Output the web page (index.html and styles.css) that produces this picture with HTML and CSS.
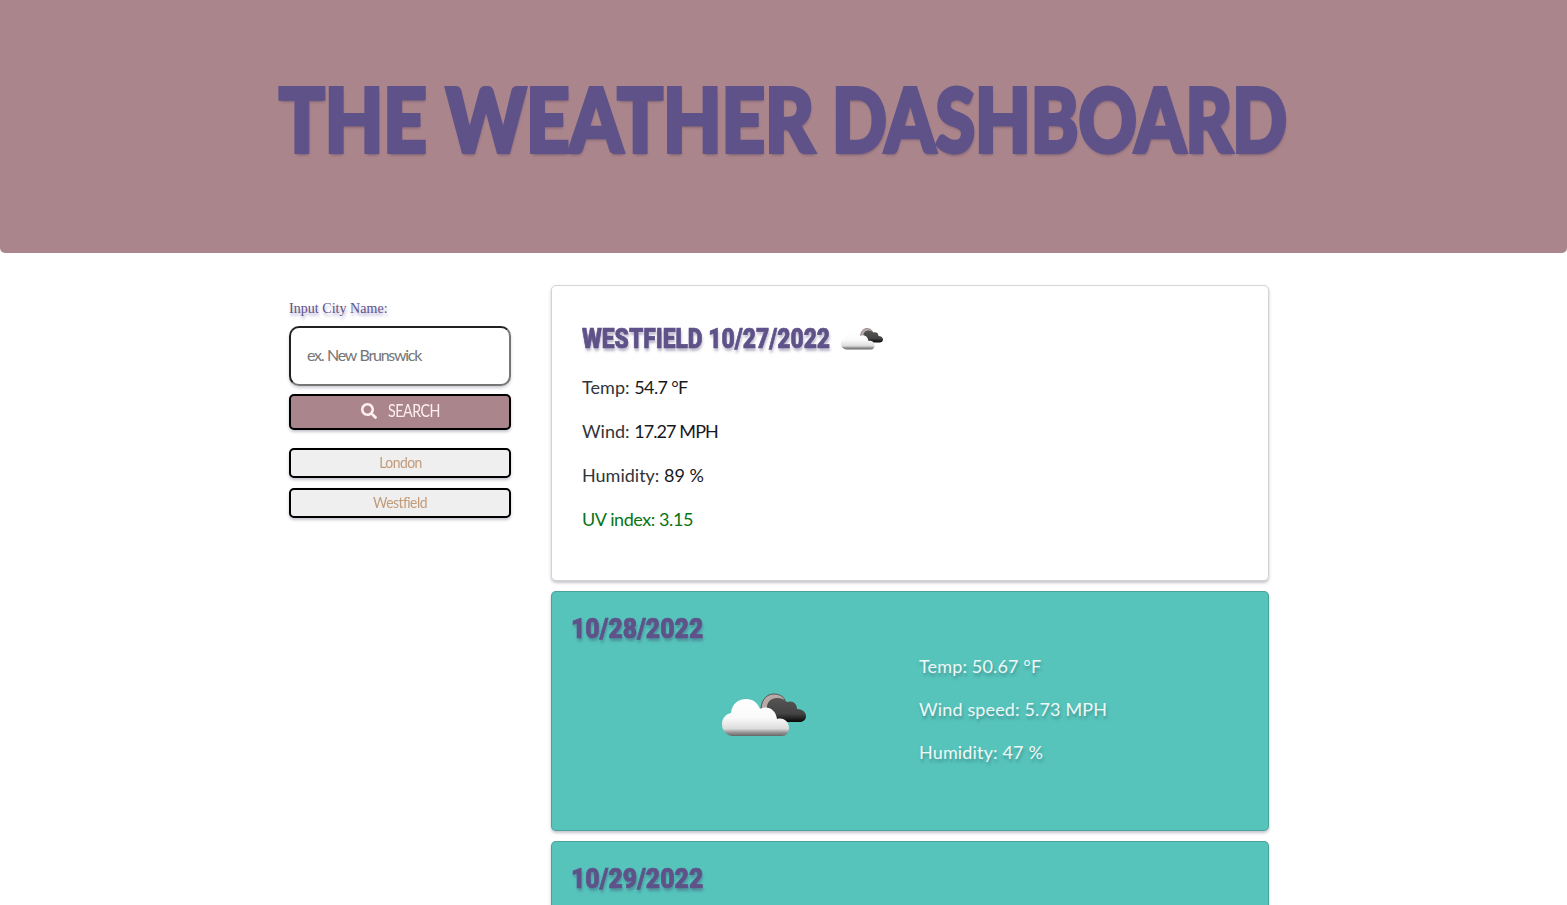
FILE: index.html
```html
<!DOCTYPE html>
<html lang="en">
<head>
<meta charset="utf-8">
<title>The Weather Dashboard</title>
<link rel="stylesheet" href="styles.css">
</head>
<body>
<svg class="defs" width="0" height="0" aria-hidden="true">
  <defs>
    <linearGradient id="white-cloud" x1="0" y1="0" x2="0" y2="1"><stop offset="0" stop-color="#fff"/><stop offset=".5" stop-color="#fafafa"/><stop offset=".8" stop-color="#ddd"/><stop offset=".9" stop-color="#999"/><stop offset="1" stop-color="#666"/></linearGradient>
    <linearGradient id="dark-cloud" x1="0" y1="0" x2="0" y2="1"><stop offset="0" stop-color="#555"/><stop offset=".65" stop-color="#444"/><stop offset="1" stop-color="#080808"/></linearGradient>
    <symbol id="clouds" viewBox="0 0 84 44">
      <path d="M39 15C40 6 45 1 52 1c5 0 9 2 11 6L46 17z" fill="#b9aaa8" stroke="#555" stroke-width="1"/>
      <path d="M45 17C44 9 49 5 55 5c5 0 8 2 10 4 6-2 10 2 10 7 5 0 9 3 9 7 0 4-3 6-7 6H50z" fill="url(#dark-cloud)"/>
      <path d="M10 43C4 42 0 38 0 31c0-6 4-10 9-11C10 11 16 6 24 6c7 0 12 4 14 10 8-4 16 1 17 10 7-2 12 3 12 9 0 5-3 8-7 8z" fill="url(#white-cloud)"/>
    </symbol>
  </defs>
</svg>
<header class="banner"><h1 class="title"><span class="word the">THE</span> <span class="word weather">WEATHER</span> <span class="word dashboard">DASHBOARD</span></h1></header>
<main class="layout">
  <aside class="sidebar">
    <label class="label" for="city">Input City Name:</label>
    <div class="field"><input class="input" id="city" placeholder="ex. New Brunswick"></div>
    <button class="button search"><svg class="glass" viewBox="0 0 512 512"><path d="M505 442.700 405.300 343c-4.500-4.500-10.600-7-17-7H372c27.600-35.300 44-79.700 44-128C416 93.100 322.900 0 208 0S0 93.100 0 208s93.100 208 208 208c48.300 0 92.700-16.400 128-44v16.300c0 6.400 2.500 12.500 7 17l99.700 99.700c9.400 9.400 24.600 9.400 33.900 0l28.300-28.300c9.400-9.400 9.400-24.600.1-34zM208 336c-70.700 0-128-57.200-128-128 0-70.700 57.200-128 128-128 70.700 0 128 57.200 128 128 0 70.700-57.200 128-128 128z"/></svg><span class="narrow">SEARCH</span></button>
    <button class="button city"><span class="narrow">London</span></button>
    <button class="button city"><span class="narrow">Westfield</span></button>
  </aside>
  <div class="cards">
    <section class="card today">
      <div class="heading-row"><h2 class="heading city-date">WESTFIELD 10/27/2022</h2><svg class="small-clouds"><use href="#clouds"/></svg></div>
      <p class="reading temp">Temp: <span class="value">54.7 °F</span></p>
      <p class="reading wind">Wind: <span class="value">17.27 MPH</span></p>
      <p class="reading humidity">Humidity: <span class="value">89 %</span></p>
      <p class="reading uv">UV index: 3.15</p>
    </section>
    <section class="card forecast">
      <h2 class="heading date">10/28/2022</h2>
      <div class="details">
        <svg class="large-clouds"><use href="#clouds"/></svg>
        <div class="stats"><p class="stat">Temp: 50.67 °F</p><p class="stat">Wind speed: 5.73 MPH</p><p class="stat">Humidity: 47 %</p></div>
      </div>
    </section>
    <section class="card forecast"><h2 class="heading date">10/29/2022</h2></section>
  </div>
</main>
</body>
</html>
```
FILE: styles.css
```css
* { box-sizing: border-box; }
body { margin: 0; height: 905px; overflow: hidden; background: #fff; color: #212529; font-family: Lato, sans-serif; }
h1, h2, p { margin: 0; }
.defs { position: absolute; }
.banner { height: 253px; padding: 60px 0 0 279px; background: #aa858c; border-radius: 0 0 5px 5px; }
.title { display: flex; font: 900 88px/116px Lato, sans-serif; color: #5f5289; text-shadow: 1px 3px 3px rgba(50,35,70,.4); white-space: nowrap; }
.word { flex: none; transform-origin: left; -webkit-text-stroke: 4px #5f5289; stroke-linejoin: round; }
.the { width: 167px; transform: scaleX(.86); }
.weather { width: 386px; transform: scaleX(.86); }
.dashboard { width: 452px; transform: scaleX(.817); }
.layout { display: flex; gap: 40px; padding: 32px 0 0 289px; }
.sidebar { width: 222px; padding-top: 14px; display: flex; flex-direction: column; }
.label { font: 14px/20px "Liberation Serif", serif; letter-spacing: .04px; color: #5f5289; text-shadow: 1px 3px 3px rgba(80,65,150,.45); }
.field { margin-top: 7px; height: 60px; }
.input { width: 222px; height: 60px; padding: 0 16px 3px; border: 2px inset #767676; border-radius: 10px; background: #fff; font: 16px Lato, sans-serif; letter-spacing: -1.28px; word-spacing: 1px; box-shadow: 0 2px 3px rgba(60,64,90,.25); }
.input::placeholder { color: #757575; opacity: 1; }
.button { width: 222px; height: 30px; padding: 0 0 2px; display: flex; align-items: center; justify-content: center; border: 2px solid #000; border-radius: 5px; background: #efefef; color: #c29b79; font: 16px/20px Lato, sans-serif; box-shadow: 0 2px 3px rgba(60,64,90,.3); }
.search { height: 36px; margin: 8px 0 18px; background: #aa858c; color: #fff0ee; gap: 11px; font-size: 17px; }
.glass { width: 16px; height: 16px; fill: currentColor; }
.narrow { transform: scaleX(.87); }
.city { margin-bottom: 10px; letter-spacing: -.6px; }
.search .narrow { transform: scaleX(.84); transform-origin: left; margin-right: -10px; letter-spacing: -.6px; }
.cards { width: 718px; }
.card { border: 1px solid rgba(0,0,0,.17); border-radius: 5px; margin-bottom: 10px; box-shadow: 0 2px 3px rgba(60,64,90,.3); }
.today { height: 296px; padding: 35px 30px; }
.heading { font: 900 28px/34px Roboto, sans-serif; color: #5f5289; text-shadow: 1px 3px 3px rgba(60,50,100,.35); white-space: nowrap; transform-origin: left; -webkit-text-stroke: .7px #5f5289; }
.heading-row { display: flex; align-items: center; height: 36px; margin-bottom: 8px; }
.city-date { width: 259px; transform: scaleX(.815); }
.small-clouds { width: 42px; height: 22px; }
.reading { height: 44px; font: 18px/44px Lato, sans-serif; color: #30353a; white-space: nowrap; }
.value { color: #17191c; }
.temp { letter-spacing: .06px; }
.temp .value { letter-spacing: -.65px; }
.wind .value { letter-spacing: -.9px; }
.reading.uv { color: #087515; letter-spacing: -.42px; }
.forecast { height: 240px; padding: 20px 19px 19px; background: #56c4bb; }
.date { transform: scaleX(.885); }
.details { display: flex; padding-left: 151px; }
.large-clouds { width: 84px; height: 44px; margin-top: 47px; filter: blur(.4px); }
.stats { margin-left: 113px; margin-top: -1px; }
.stat { height: 43px; font: 18px/43px Lato, sans-serif; letter-spacing: .15px; color: #eef8f6; text-shadow: 1px 3px 3px rgba(40,80,90,.4); white-space: nowrap; }
```
